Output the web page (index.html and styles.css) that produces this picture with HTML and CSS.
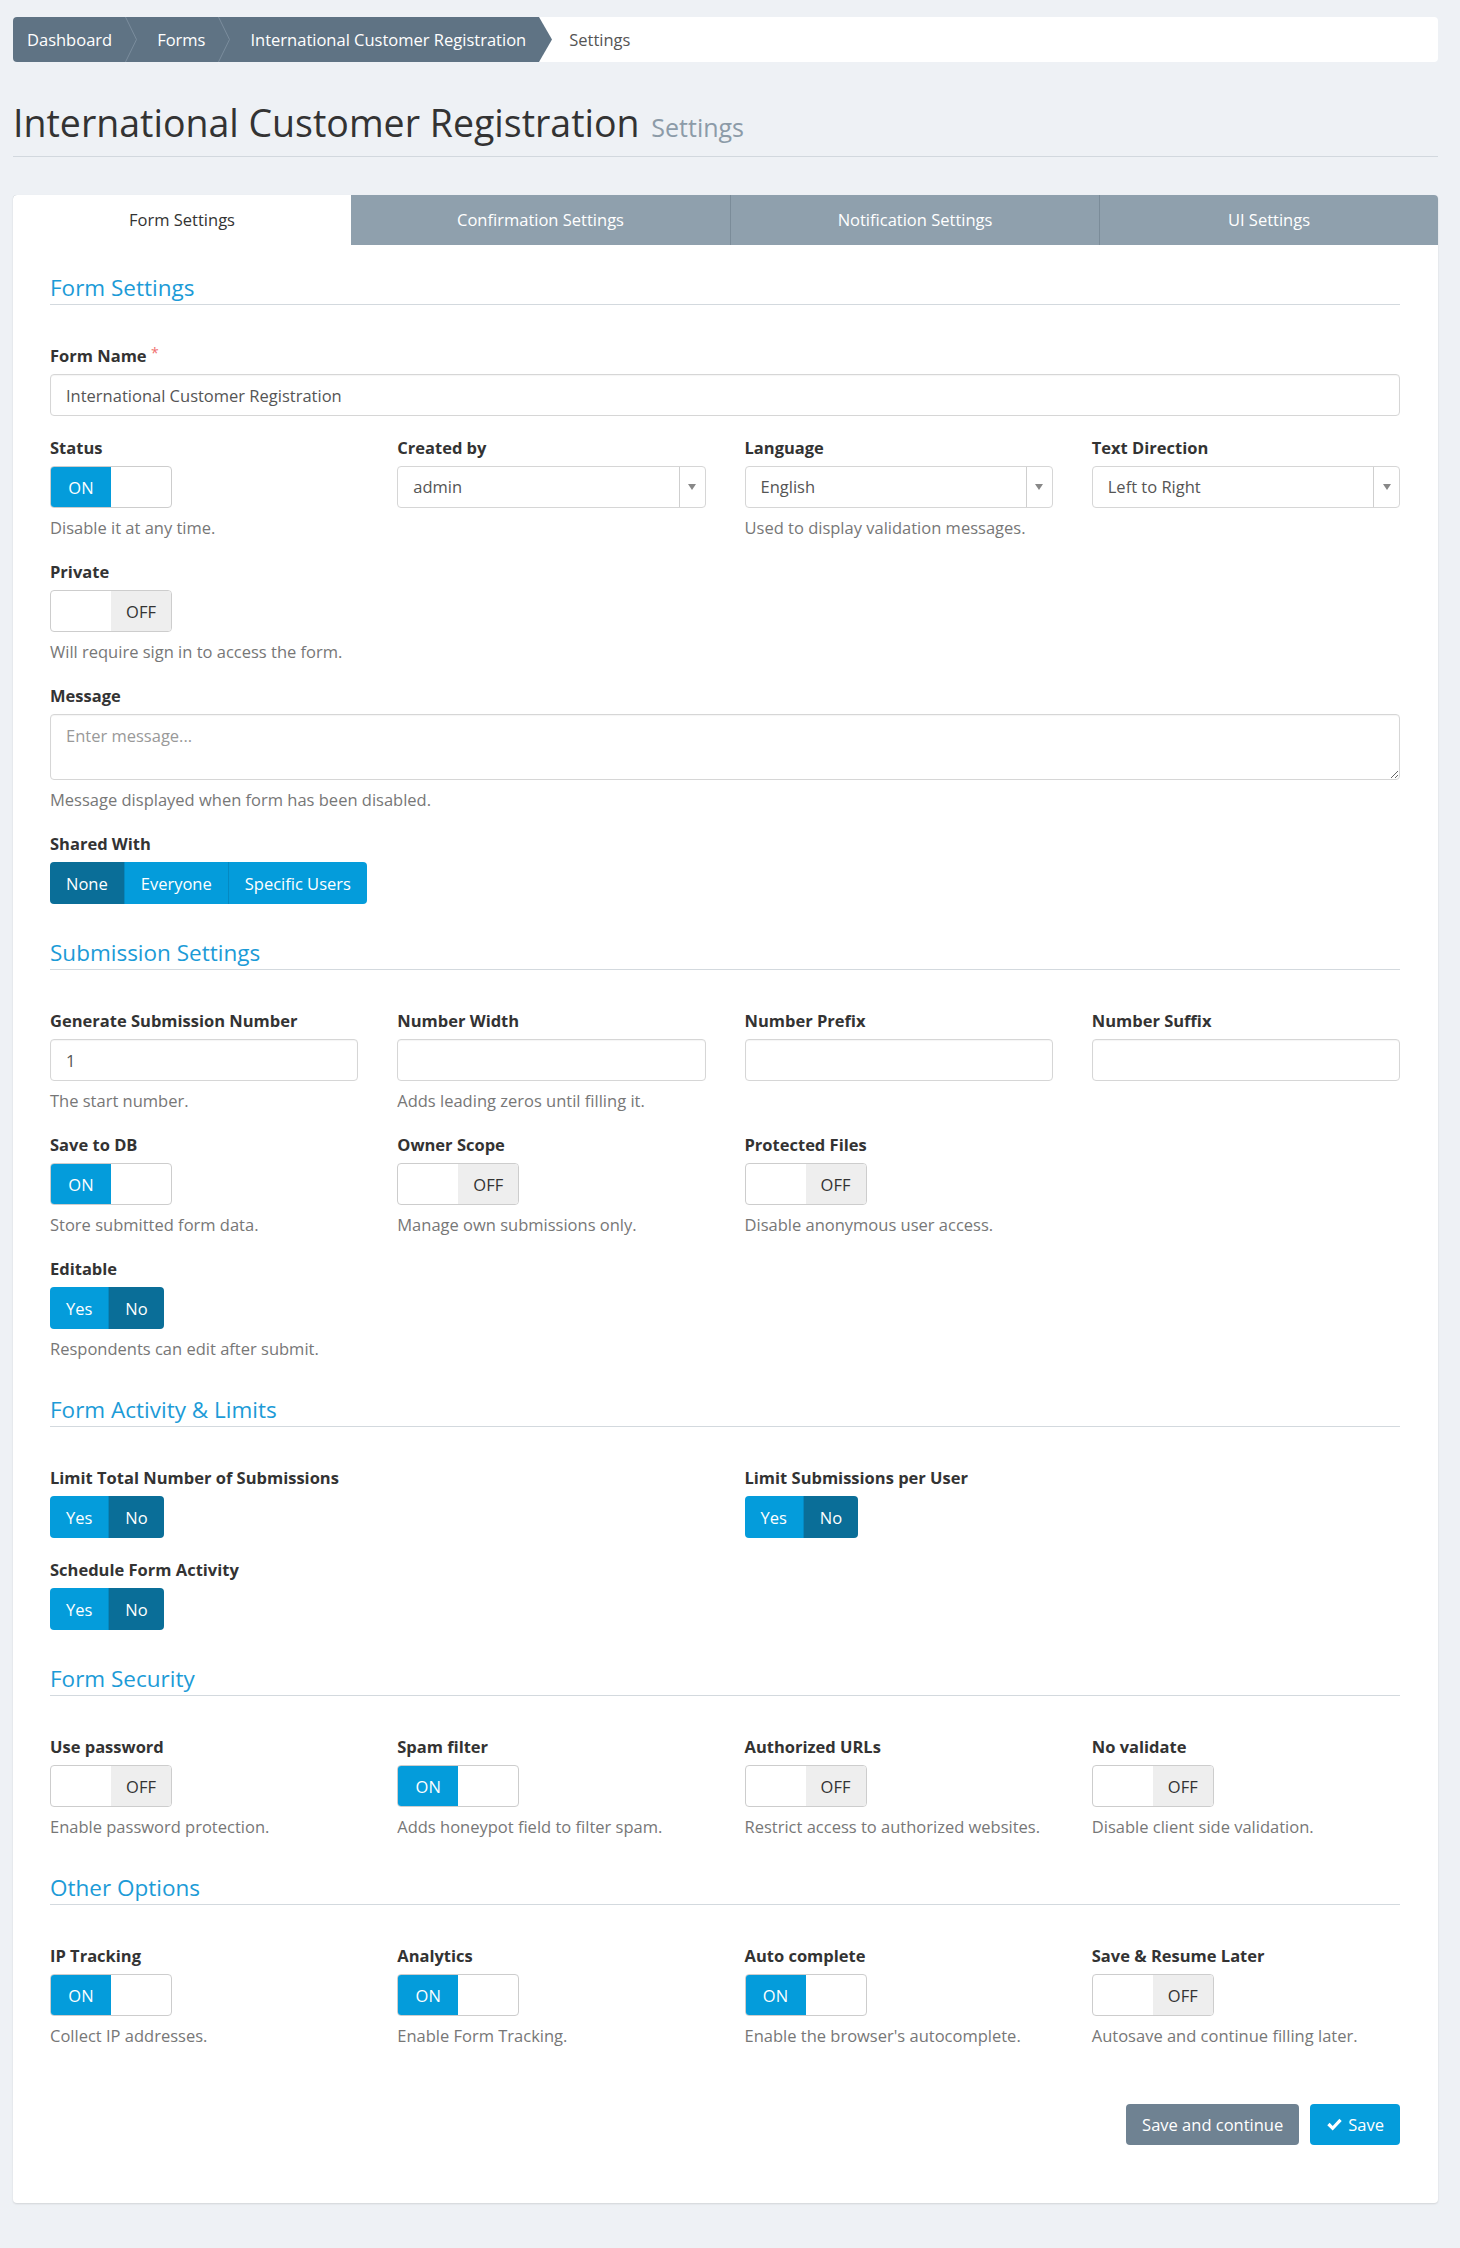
FILE: index.html
```html
<!DOCTYPE html>
<html lang="en">
<head>
    <meta charset="UTF-8">
    <title>Settings - International Customer Registration</title>
    <link rel="stylesheet" href="styles.css">
</head>
<body>
<div class="page">
    <div class="crumbs">
        <div class="crumbs-path">
            <a class="crumb crumb-first" href="#">Dashboard</a>
            <svg class="crumb-sep" width="12" height="45" viewBox="0 0 12 45"><polyline points="0.5,0 11.5,22.5 0.5,45" fill="none" stroke="#7b8d9d" stroke-width="1"/></svg>
            <a class="crumb" href="#">Forms</a>
            <svg class="crumb-sep" width="12" height="45" viewBox="0 0 12 45"><polyline points="0.5,0 11.5,22.5 0.5,45" fill="none" stroke="#7b8d9d" stroke-width="1"/></svg>
            <a class="crumb" href="#">International Customer Registration</a>
        </div>
        <svg class="crumb-tip" width="13" height="45" viewBox="0 0 13 45"><polygon points="0,0 13,22.5 0,45" fill="#5f7384"/></svg>
        <span class="crumb-current">Settings</span>
    </div>

    <h1 class="page-title">International Customer Registration <small>Settings</small></h1>

    <div class="panel">
        <ul class="tabs">
            <li class="tab active">Form Settings</li>
            <li class="tab">Confirmation Settings</li>
            <li class="tab">Notification Settings</li>
            <li class="tab">UI Settings</li>
        </ul>

        <div class="panel-body">
            <h3 class="section-title first">Form Settings</h3>

            <div class="form-group">
                <label>Form Name <span class="required">*</span></label>
                <input class="form-control" type="text" value="International Customer Registration">
            </div>

            <div class="row cols-4">
                <div class="form-group">
                    <label>Status</label>
                    <div class="switch on"><span class="switch-on">ON</span><span class="switch-off"></span></div>
                    <p class="help">Disable it at any time.</p>
                </div>
                <div class="form-group">
                    <label>Created by</label>
                    <div class="select"><span class="select-value">admin</span><span class="select-arrow"></span></div>
                </div>
                <div class="form-group">
                    <label>Language</label>
                    <div class="select"><span class="select-value">English</span><span class="select-arrow"></span></div>
                    <p class="help">Used to display validation messages.</p>
                </div>
                <div class="form-group">
                    <label>Text Direction</label>
                    <div class="select"><span class="select-value">Left to Right</span><span class="select-arrow"></span></div>
                </div>
            </div>

            <div class="form-group">
                <label>Private</label>
                <div class="switch off"><span class="switch-on"></span><span class="switch-off">OFF</span></div>
                <p class="help">Will require sign in to access the form.</p>
            </div>

            <div class="form-group">
                <label>Message</label>
                <textarea class="form-control textarea" placeholder="Enter message..."></textarea>
                <p class="help">Message displayed when form has been disabled.</p>
            </div>

            <div class="form-group">
                <label>Shared With</label>
                <div class="btn-group">
                    <button class="btn active">None</button><button class="btn">Everyone</button><button class="btn">Specific Users</button>
                </div>
            </div>

            <h3 class="section-title">Submission Settings</h3>

            <div class="row cols-4">
                <div class="form-group">
                    <label>Generate Submission Number</label>
                    <input class="form-control" type="text" value="1">
                    <p class="help">The start number.</p>
                </div>
                <div class="form-group">
                    <label>Number Width</label>
                    <input class="form-control" type="text">
                    <p class="help">Adds leading zeros until filling it.</p>
                </div>
                <div class="form-group">
                    <label>Number Prefix</label>
                    <input class="form-control" type="text">
                </div>
                <div class="form-group">
                    <label>Number Suffix</label>
                    <input class="form-control" type="text">
                </div>
            </div>

            <div class="row cols-4">
                <div class="form-group">
                    <label>Save to DB</label>
                    <div class="switch on"><span class="switch-on">ON</span><span class="switch-off"></span></div>
                    <p class="help">Store submitted form data.</p>
                </div>
                <div class="form-group">
                    <label>Owner Scope</label>
                    <div class="switch off"><span class="switch-on"></span><span class="switch-off">OFF</span></div>
                    <p class="help">Manage own submissions only.</p>
                </div>
                <div class="form-group">
                    <label>Protected Files</label>
                    <div class="switch off"><span class="switch-on"></span><span class="switch-off">OFF</span></div>
                    <p class="help">Disable anonymous user access.</p>
                </div>
            </div>

            <div class="form-group">
                <label>Editable</label>
                <div class="btn-group">
                    <button class="btn">Yes</button><button class="btn active">No</button>
                </div>
                <p class="help">Respondents can edit after submit.</p>
            </div>

            <h3 class="section-title">Form Activity &amp; Limits</h3>

            <div class="row cols-2">
                <div class="form-group">
                    <label>Limit Total Number of Submissions</label>
                    <div class="btn-group">
                        <button class="btn">Yes</button><button class="btn active">No</button>
                    </div>
                </div>
                <div class="form-group">
                    <label>Limit Submissions per User</label>
                    <div class="btn-group">
                        <button class="btn">Yes</button><button class="btn active">No</button>
                    </div>
                </div>
            </div>

            <div class="form-group">
                <label>Schedule Form Activity</label>
                <div class="btn-group">
                    <button class="btn">Yes</button><button class="btn active">No</button>
                </div>
            </div>

            <h3 class="section-title">Form Security</h3>

            <div class="row cols-4">
                <div class="form-group">
                    <label>Use password</label>
                    <div class="switch off"><span class="switch-on"></span><span class="switch-off">OFF</span></div>
                    <p class="help">Enable password protection.</p>
                </div>
                <div class="form-group">
                    <label>Spam filter</label>
                    <div class="switch on"><span class="switch-on">ON</span><span class="switch-off"></span></div>
                    <p class="help">Adds honeypot field to filter spam.</p>
                </div>
                <div class="form-group">
                    <label>Authorized URLs</label>
                    <div class="switch off"><span class="switch-on"></span><span class="switch-off">OFF</span></div>
                    <p class="help">Restrict access to authorized websites.</p>
                </div>
                <div class="form-group">
                    <label>No validate</label>
                    <div class="switch off"><span class="switch-on"></span><span class="switch-off">OFF</span></div>
                    <p class="help">Disable client side validation.</p>
                </div>
            </div>

            <h3 class="section-title">Other Options</h3>

            <div class="row cols-4">
                <div class="form-group">
                    <label>IP Tracking</label>
                    <div class="switch on"><span class="switch-on">ON</span><span class="switch-off"></span></div>
                    <p class="help">Collect IP addresses.</p>
                </div>
                <div class="form-group">
                    <label>Analytics</label>
                    <div class="switch on"><span class="switch-on">ON</span><span class="switch-off"></span></div>
                    <p class="help">Enable Form Tracking.</p>
                </div>
                <div class="form-group">
                    <label>Auto complete</label>
                    <div class="switch on"><span class="switch-on">ON</span><span class="switch-off"></span></div>
                    <p class="help">Enable the browser's autocomplete.</p>
                </div>
                <div class="form-group">
                    <label>Save &amp; Resume Later</label>
                    <div class="switch off"><span class="switch-on"></span><span class="switch-off">OFF</span></div>
                    <p class="help">Autosave and continue filling later.</p>
                </div>
            </div>

            <div class="form-actions">
                <button class="btn btn-default">Save and continue</button>
                <button class="btn btn-primary"><svg class="icon-check" width="17" height="17" viewBox="0 0 16 16"><path d="M1.2 8.6 L3.4 6.4 L6.3 9.3 L12.6 2.6 L14.8 4.8 L6.3 13.6 Z" fill="#fff"/></svg>Save</button>
            </div>
        </div>
    </div>
</div>
</body>
</html>
```

FILE: styles.css
```css
body {
    margin: 0;
    padding: 0;
    background-color: #eef1f5;
    font-family: "Open Sans", "Noto Sans", Arial, sans-serif;
    font-size: 16.5px;
    color: #333;
}
.page {
    padding: 17px 22px 42px 13px;
}

/* breadcrumb */
.crumbs {
    display: flex;
    align-items: stretch;
    height: 45px;
    background-color: #fff;
    border-radius: 4px;
}
.crumbs-path {
    display: flex;
    align-items: center;
    background-color: #5f7384;
    border-radius: 4px 0 0 4px;
}
.crumb {
    color: #fff;
    text-decoration: none;
    padding: 0 13px 0 20px;
    white-space: nowrap;
}
.crumb-first {
    padding-left: 14px;
}
.crumb-sep,
.crumb-tip {
    display: block;
    flex: none;
}
.crumb-current {
    display: flex;
    align-items: center;
    padding-left: 17px;
    color: #555;
}

/* title */
.page-title {
    margin: 39px 0 0;
    padding-bottom: 7px;
    font-size: 37.5px;
    line-height: 44px;
    font-weight: 400;
    color: #333;
    border-bottom: 1px solid #d2d8de;
}
.page-title small {
    font-size: 25px;
    color: #8c9ba8;
    margin-left: 2px;
}

/* panel + tabs */
.panel {
    margin-top: 38px;
    background-color: #fff;
    border-radius: 4px;
    box-shadow: 0 1px 2px rgba(0, 0, 0, 0.12);
    overflow: hidden;
}
.tabs {
    display: grid;
    grid-template-columns: 338px 379px 369px 1fr;
    list-style: none;
    margin: 0;
    padding: 0;
    background-color: #8fa0ad;
}
.tab {
    height: 50px;
    line-height: 50px;
    text-align: center;
    color: #fff;
}
.tab + .tab + .tab {
    border-left: 1px solid #7b8c99;
}
.tab.active {
    background-color: #fff;
    color: #333;
}
.panel-body {
    padding: 29px 38px 58px 37px;
}

.section-title {
    margin: 0 0 39px;
    padding: 15px 0 3px;
    font-size: 22.5px;
    line-height: 27px;
    font-weight: 400;
    color: #1c9bd7;
    border-bottom: 1px solid #d3d9de;
}
.section-title.first {
    padding-top: 0;
}

/* form */
.row {
    display: grid;
    column-gap: 39px;
}
.cols-4 {
    grid-template-columns: repeat(4, 1fr);
}
.cols-2 {
    grid-template-columns: repeat(2, 1fr);
}
.form-group {
    margin-bottom: 20px;
}
.form-group label {
    display: block;
    font-weight: 700;
    line-height: 24px;
    margin-bottom: 6px;
    color: #333;
}
.required {
    color: #f07070;
    font-weight: 400;
    font-size: 14px;
    vertical-align: top;
    line-height: 18px;
}
.help {
    margin: 8px 0 0;
    line-height: 24px;
    color: #777;
}
.form-control {
    display: block;
    width: 100%;
    height: 42px;
    box-sizing: border-box;
    padding: 0 15px;
    border: 1px solid #d6d6d6;
    border-radius: 4px;
    box-shadow: inset 0 1px 1px rgba(0, 0, 0, 0.04);
    font-family: inherit;
    font-size: 16.5px;
    color: #555;
    background-color: #fff;
}
.textarea {
    height: 66px;
    padding: 9px 15px;
    line-height: 24px;
    resize: vertical;
}
.textarea::placeholder {
    color: #999;
}

.select {
    display: flex;
    height: 42px;
    box-sizing: border-box;
    border: 1px solid #d6d6d6;
    border-radius: 4px;
    color: #555;
}
.select-value {
    flex: 1;
    padding-left: 15px;
    line-height: 40px;
}
.select-arrow {
    width: 25px;
    border-left: 1px solid #cfcfcf;
    display: flex;
    align-items: center;
    justify-content: center;
}
.select-arrow::before {
    content: "";
    border-left: 4px solid transparent;
    border-right: 4px solid transparent;
    border-top: 6px solid #888;
}

.switch {
    display: flex;
    width: 122px;
    height: 42px;
    box-sizing: border-box;
    border: 1px solid #cdcdcd;
    border-radius: 4px;
    overflow: hidden;
}
.switch span {
    flex: 1;
    display: flex;
    align-items: center;
    justify-content: center;
}
.switch.on .switch-on {
    background-color: #049cdb;
    color: #fff;
}
.switch.off .switch-off {
    background-color: #eee;
    color: #333;
}

.btn {
    height: 42px;
    padding: 0 16px;
    border: none;
    font-family: inherit;
    font-size: 16.5px;
    color: #fff;
    background-color: #049cdb;
    cursor: pointer;
}
.btn-group {
    display: inline-flex;
    border-radius: 4px;
    overflow: hidden;
}
.btn-group .btn + .btn {
    border-left: 1px solid #0489c2;
}
.btn-group .btn.active {
    background-color: #0a6e98;
}

.form-actions {
    display: flex;
    justify-content: flex-end;
    gap: 11px;
    margin-top: 36px;
}
.form-actions .btn {
    height: 41px;
    border-radius: 4px;
    display: flex;
    align-items: center;
}
.btn-default {
    background-color: #6f8292;
}
.btn-primary {
    background-color: #049cdb;
}
.icon-check {
    margin-right: 5px;
}
```
